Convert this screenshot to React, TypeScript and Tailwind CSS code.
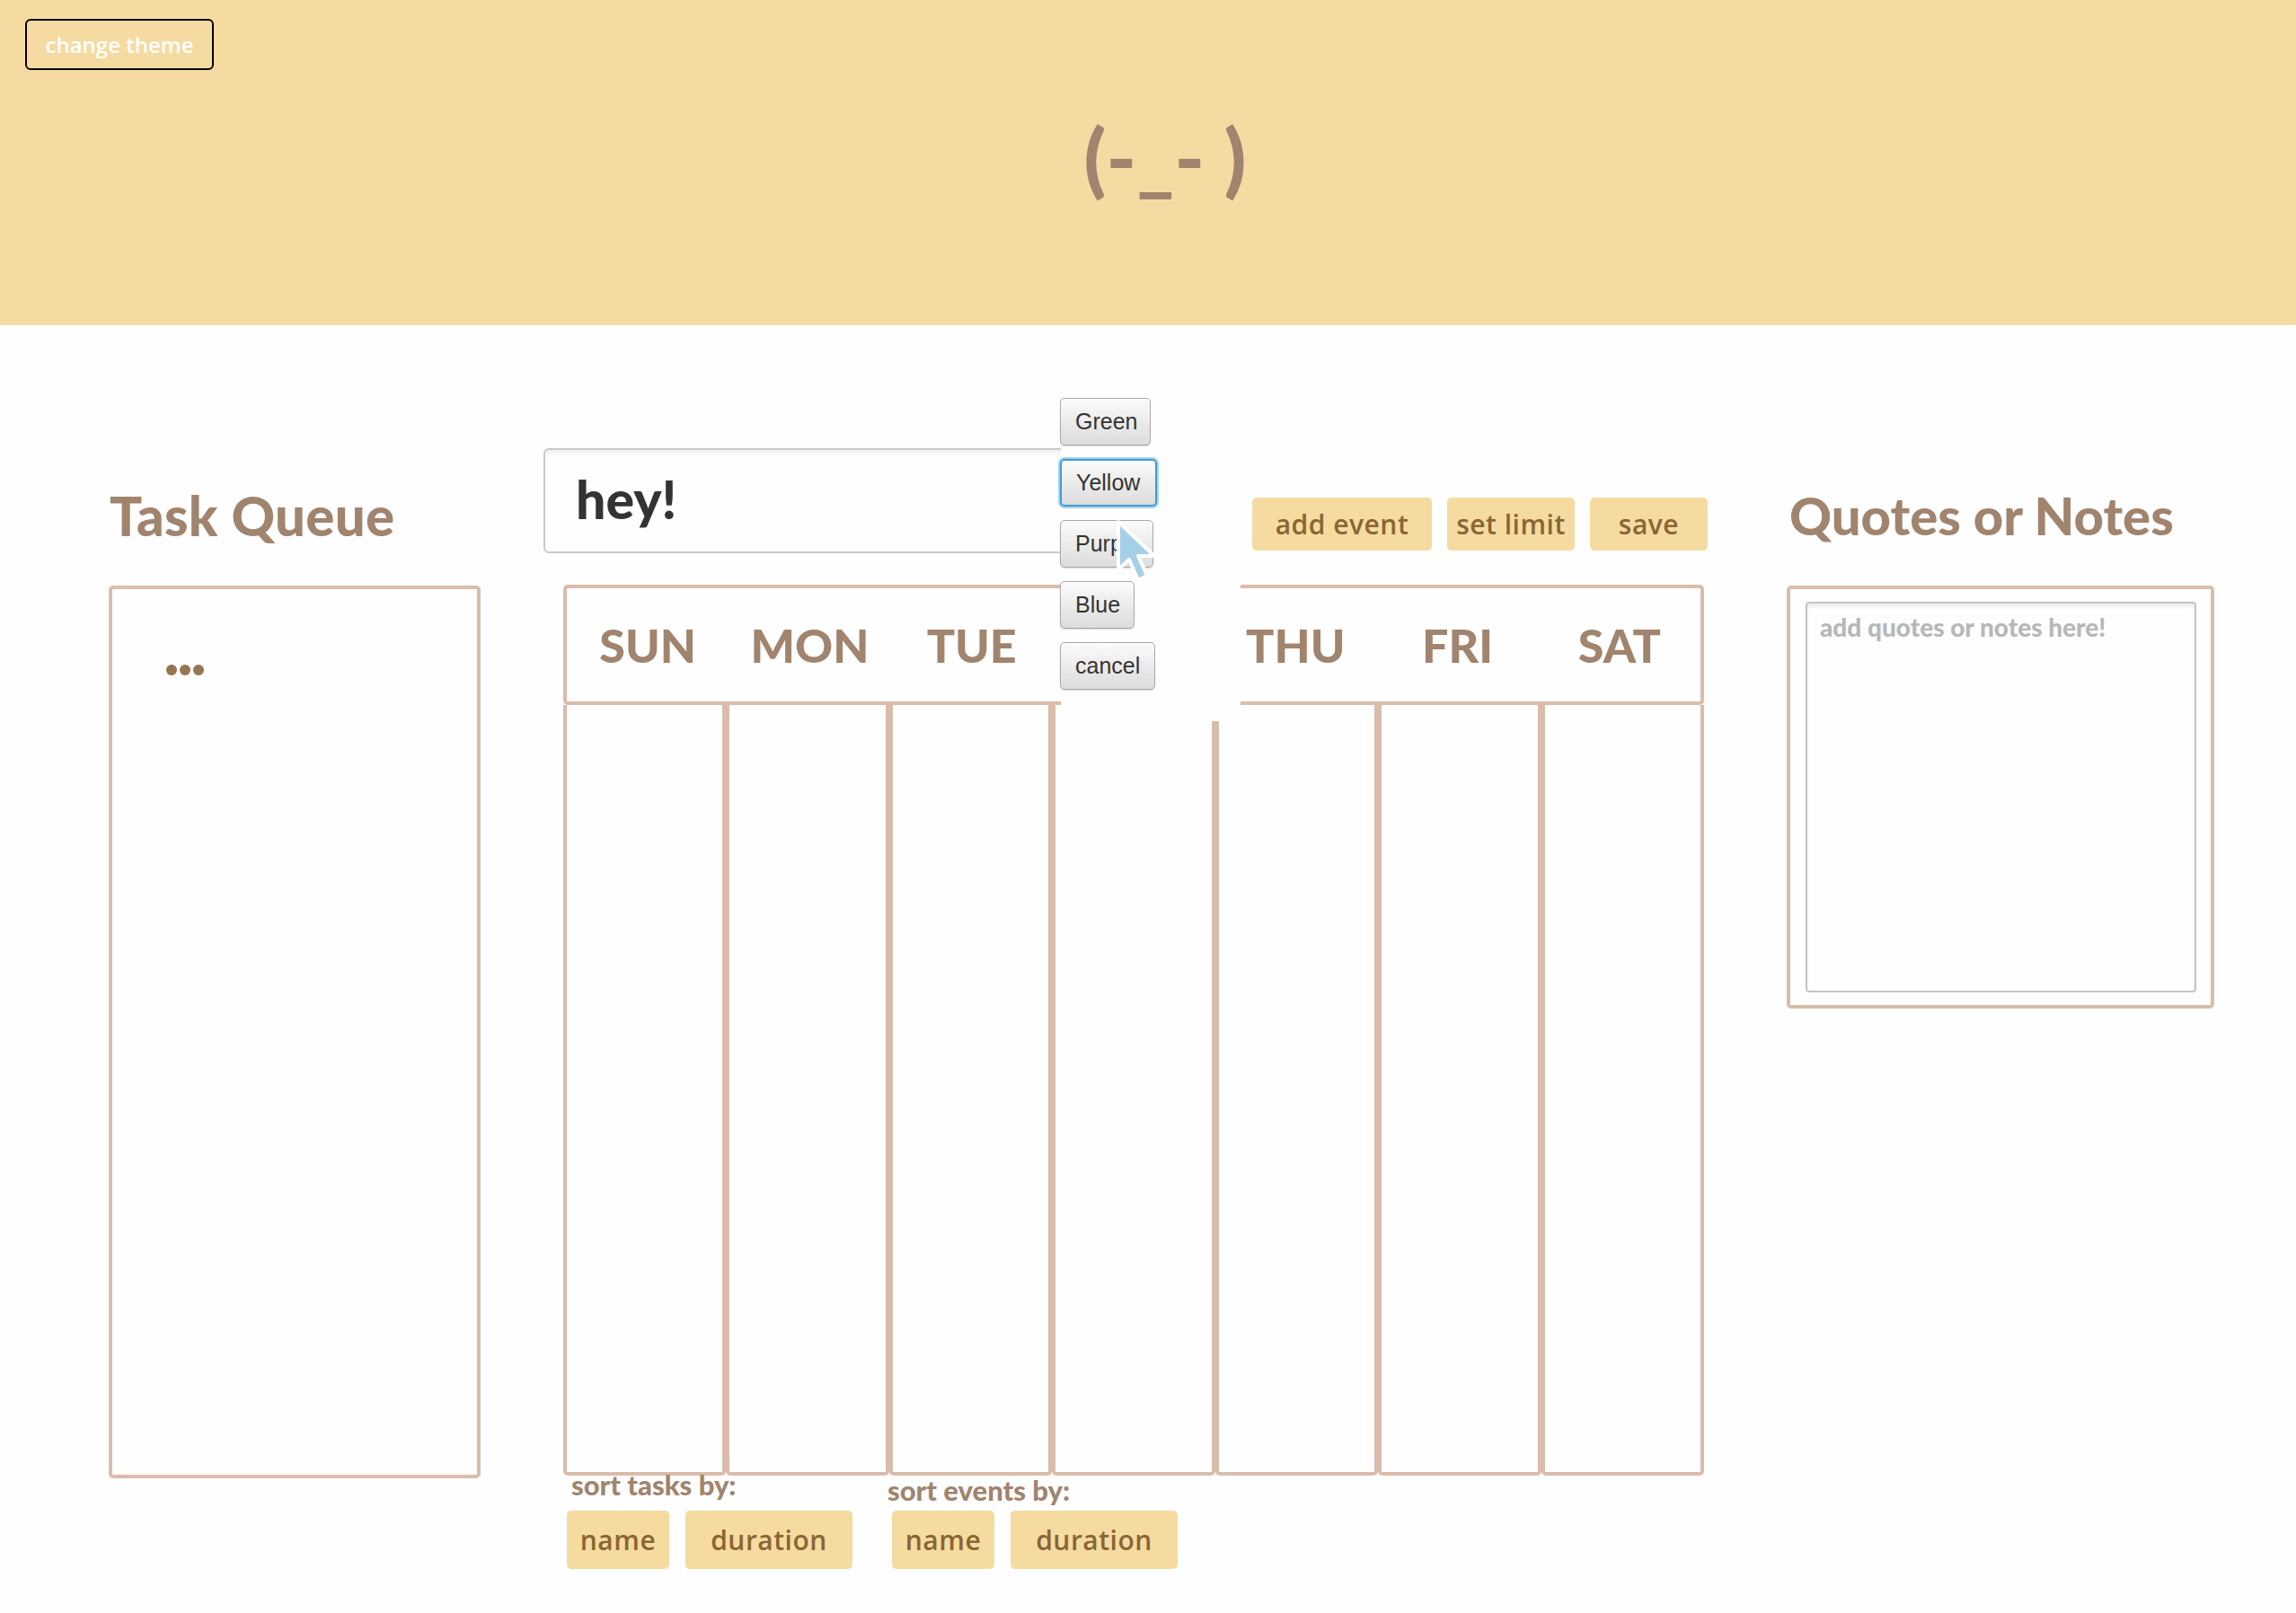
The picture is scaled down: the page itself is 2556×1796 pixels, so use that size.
import React from "react";

const brown = "text-[#a0846e]";

function ThemeBtn({ label, w, active }: { label: string; w: string; active?: boolean }) {
  return (
    <button
      className={
        "h-[53px] rounded-[5px] bg-linear-to-b from-[#fbfbfb] to-[#dcdcdc] text-left pl-[16px] text-[25px] text-[#333] font-['Liberation_Sans',sans-serif] shadow-[0_1px_1px_rgba(0,0,0,0.15)] " +
        w +
        (active
          ? " border-2 border-[#3d9bd4] ring-2 ring-[#a6d3ee]"
          : " border border-[#a9a9a9]")
      }
    >
      {label}
    </button>
  );
}

function YBtn({ label, w, h = "h-[59px]" }: { label: string; w: string; h?: string }) {
  return (
    <button
      className={
        "rounded-[5px] bg-[#f6dba0] text-[#8a6535] text-[30px] font-semibold font-['Open_Sans',sans-serif] leading-none tracking-[0.5px] " +
        w +
        " " +
        h
      }
    >
      {label}
    </button>
  );
}

export default function App() {
  const days = ["SUN", "MON", "TUE", "", "THU", "FRI", "SAT"];
  return (
    <div className="min-h-[1796px] bg-[#fefefe] font-['Lato',sans-serif]">
      <header className="h-[362px] bg-[#f5dba1]">
        <div className="pl-[28px] pt-[21px]">
          <button className="h-[57px] w-[210px] rounded-[6px] border-2 border-black text-white text-[24px] font-semibold font-['Open_Sans',sans-serif] leading-none">
            change theme
          </button>
        </div>
        <div className="mt-[46px] flex justify-center pl-[38px]">
          <span className="text-[90px] leading-[100px] font-black text-[#a0846e] whitespace-pre">(-_- )</span>
        </div>
      </header>

      <main className="flex pt-[137px] pb-[49px]">
        {/* Task Queue */}
        <section className="ml-[121px] w-[414px] shrink-0">
          <div className="h-[153px] pt-[45px]">
            <h2 className={"text-[60px] leading-[60px] font-black pl-[1px] tracking-[0.3px] " + brown}>Task Queue</h2>
          </div>
          <div className="h-[994px] rounded-[5px] border-4 border-[#dabcab] pl-[60px] pt-[84px]">
            <div className="flex gap-[3px]">
              <span className="h-[12px] w-[12px] rounded-full bg-[#957552]" />
              <span className="h-[12px] w-[12px] rounded-full bg-[#957552]" />
              <span className="h-[12px] w-[12px] rounded-full bg-[#957552]" />
            </div>
          </div>
        </section>

        {/* Calendar */}
        <section className="relative ml-[70px] w-[1296px] shrink-0">
          <div className="flex h-[152px] items-start">
            <div className="h-[117px] w-[640px] rounded-[6px] border-2 border-[#c9c9c9] shadow-[inset_0_4px_4px_rgba(0,0,0,0.05)] flex items-center pl-[34px]">
              <span className="text-[59px] font-black text-[#333] leading-none -mt-[4px]">hey!</span>
            </div>
            <div className="ml-[149px] mt-[55px] flex gap-[17px]">
              <YBtn label="add event" w="w-[200px]" />
              <YBtn label="set limit" w="w-[142px]" />
              <YBtn label="save" w="w-[131px]" />
            </div>
          </div>

          <div className="ml-[22px] w-[1270px]">
            <div className="grid h-[134px] grid-cols-7 items-center rounded-[5px] border-4 border-[#dabcab]">
              {days.map((d, i) => (
                <div key={i} className={"text-center text-[52px] font-black leading-none " + brown}>
                  {d}
                </div>
              ))}
            </div>
            <div className="grid h-[858px] grid-cols-7">
              {days.map((d, i) => (
                <div key={i} className="rounded-b-[5px] border-4 border-t-0 border-[#dabcab]" />
              ))}
            </div>
            <div className="ml-[4px] flex">
              <div className="flex flex-col">
                <div className={"-mt-[4px] mb-[15px] pl-[5px] text-[31px] font-black leading-[28px] " + brown}>
                  sort tasks by:
                </div>
                <div className="flex gap-[18px]">
                  <YBtn label="name" w="w-[114px]" h="h-[65px]" />
                  <YBtn label="duration" w="w-[186px]" h="h-[65px]" />
                </div>
              </div>
              <div className="ml-[44px] flex flex-col">
                <div className={"mt-[2px] mb-[9px] -ml-[5px] text-[31px] font-black leading-[28px] " + brown}>
                  sort events by:
                </div>
                <div className="flex gap-[18px]">
                  <YBtn label="name" w="w-[114px]" h="h-[65px]" />
                  <YBtn label="duration" w="w-[186px]" h="h-[65px]" />
                </div>
              </div>
            </div>
          </div>

          {/* theme popup overlay */}
          <div className="absolute left-[576px] top-[-69px] h-[373px] w-[200px] bg-[#fefefe]">
            <div className="flex flex-col items-start gap-[15px] pt-[13px] -ml-[1px]">
              <ThemeBtn label="Green" w="w-[101px]" />
              <ThemeBtn label="Yellow" w="w-[108px]" active />
              <ThemeBtn label="Purple" w="w-[104px]" />
              <ThemeBtn label="Blue" w="w-[83px]" />
              <ThemeBtn label="cancel" w="w-[106px]" />
            </div>
            <svg
              className="absolute left-[61px] top-[148px]"
              width="50"
              height="72"
              viewBox="0 0 50 72"
            >
              <path
                d="M3 3 L3 56 L15 45 L25 68 L35 63 L25 41 L43 41 Z"
                fill="#a3d0e7"
                stroke="#ffffff"
                strokeWidth="4"
                strokeLinejoin="round"
              />
            </svg>
          </div>
        </section>

        {/* Quotes */}
        <section className="ml-[88px] w-[476px] shrink-0">
          <div className="h-[153px] pt-[45px]">
            <h2 className={"text-[58px] leading-[60px] font-black pl-[3px] " + brown}>Quotes or Notes</h2>
          </div>
          <div className="h-[471px] rounded-[5px] border-4 border-[#dabcab] pl-[17px] pr-[16px] pt-[14px] pb-[14px]">
            <div className="h-full rounded-[4px] border-2 border-[#c4c4c4] shadow-[inset_0_4px_4px_rgba(0,0,0,0.06)] pl-[14px] pt-[11px]">
              <span className="text-[28px] font-black leading-[30px] text-[#b7b7b7]">add quotes or notes here!</span>
            </div>
          </div>
        </section>
      </main>
    </div>
  );
}
